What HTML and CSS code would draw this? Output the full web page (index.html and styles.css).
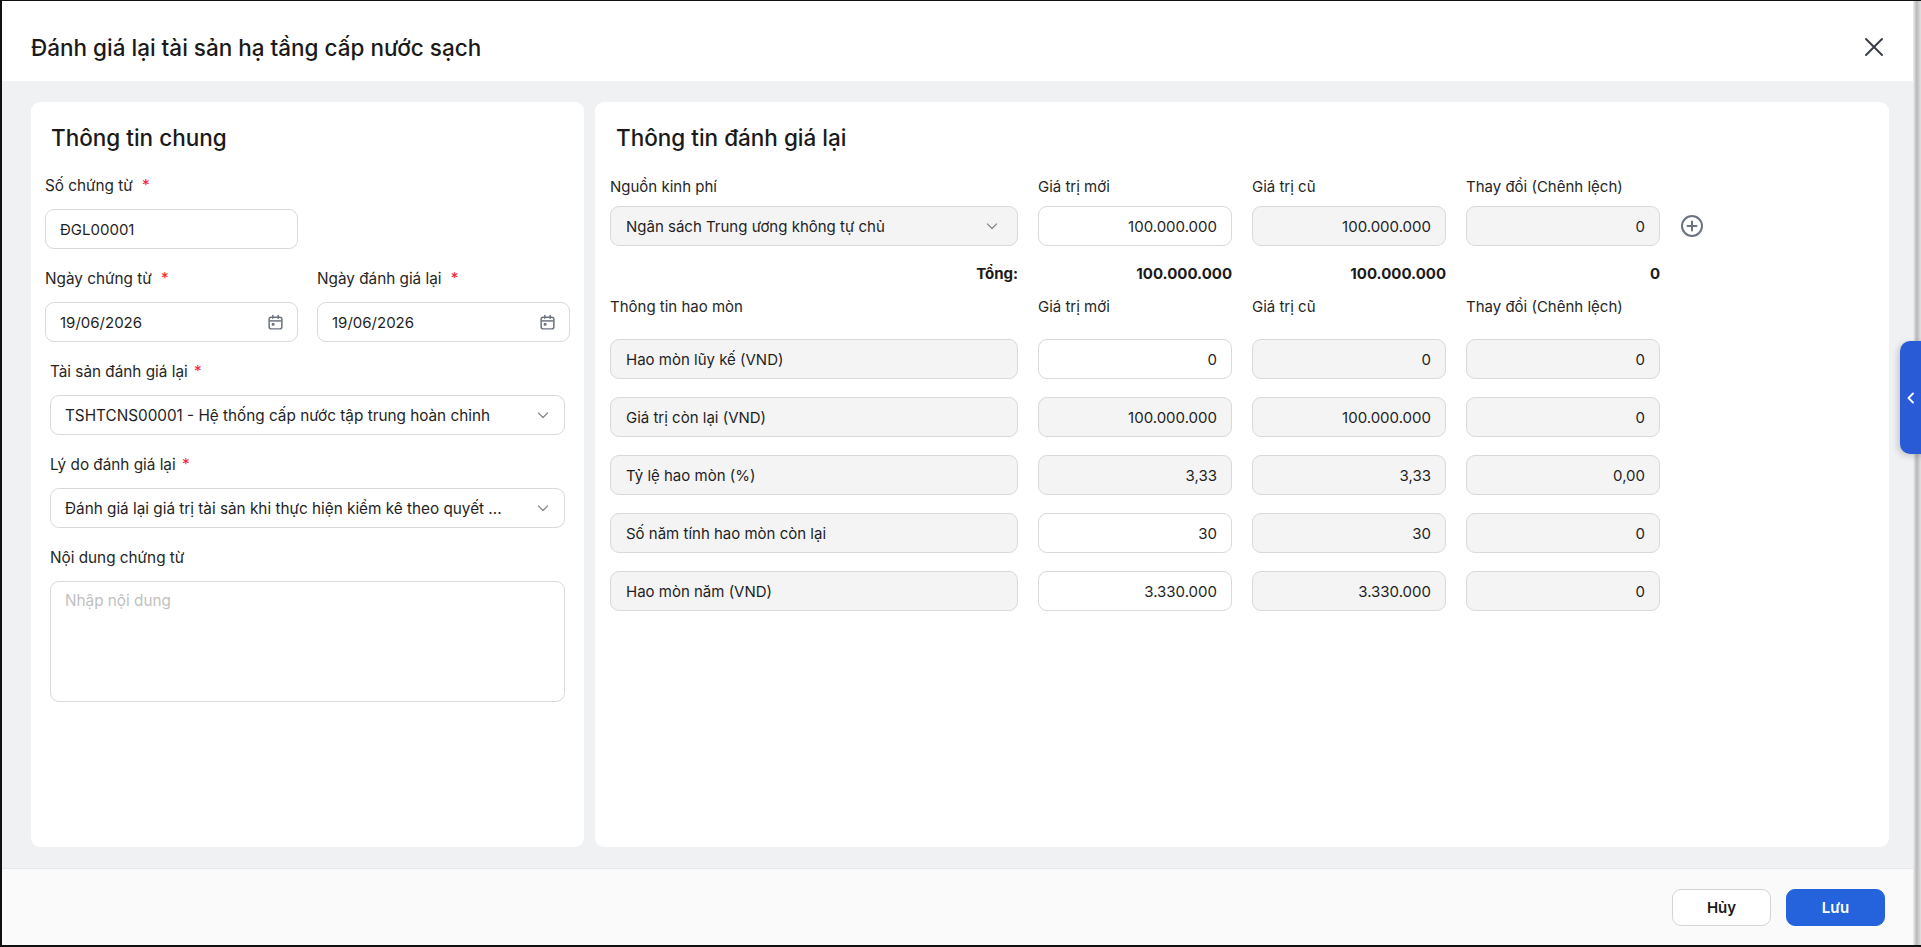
FILE: index.html
```html
<!DOCTYPE html>
<html lang="vi">
<head>
<meta charset="utf-8">
<title>Đánh giá lại tài sản hạ tầng cấp nước sạch</title>
<link rel="stylesheet" href="styles.css">
</head>
<body>
<div class="frame">
  <div class="modal">
    <header class="mhead">
      <h1 class="mtitle">Đánh giá lại tài sản hạ tầng cấp nước sạch</h1>
      <button class="close" aria-label="Đóng">
        <svg width="20" height="20" viewBox="0 0 20 20"><path d="M2 2 L18 18 M18 2 L2 18" stroke="#3a3f47" stroke-width="2" stroke-linecap="round" fill="none"/></svg>
      </button>
    </header>

    <main class="mbody">
      <section class="card card-left">
        <h2 class="ctitle">Thông tin chung</h2>
        <div class="top-fields">
          <div class="field w-half">
            <div class="lbl">Số chứng từ <span class="req req-wide">*</span></div>
            <div class="input">ĐGL00001</div>
          </div>
          <div class="two-col">
            <div class="field">
              <div class="lbl">Ngày chứng từ <span class="req req-wide">*</span></div>
              <div class="input">
                <span class="grow">19/06/2026</span>
                <svg class="cal" width="17" height="17" viewBox="0 0 16 16"><rect x="2" y="3" width="12" height="11" rx="2" fill="none" stroke="#6b7280" stroke-width="1.4"/><path d="M2.5 6.5 H13.5" stroke="#6b7280" stroke-width="1.4"/><path d="M5.5 1.5 V4 M10.5 1.5 V4" stroke="#6b7280" stroke-width="1.4" stroke-linecap="round"/><rect x="4.5" y="8.5" width="2.5" height="2.5" fill="#6b7280"/></svg>
              </div>
            </div>
            <div class="field">
              <div class="lbl">Ngày đánh giá lại <span class="req req-wide">*</span></div>
              <div class="input">
                <span class="grow">19/06/2026</span>
                <svg class="cal" width="17" height="17" viewBox="0 0 16 16"><rect x="2" y="3" width="12" height="11" rx="2" fill="none" stroke="#6b7280" stroke-width="1.4"/><path d="M2.5 6.5 H13.5" stroke="#6b7280" stroke-width="1.4"/><path d="M5.5 1.5 V4 M10.5 1.5 V4" stroke="#6b7280" stroke-width="1.4" stroke-linecap="round"/><rect x="4.5" y="8.5" width="2.5" height="2.5" fill="#6b7280"/></svg>
              </div>
            </div>
          </div>
        </div>
        <div class="bottom-fields">
          <div class="field">
            <div class="lbl">Tài sản đánh giá lại <span class="req">*</span></div>
            <div class="input select">
              <span class="grow ellip">TSHTCNS00001 - Hệ thống cấp nước tập trung hoàn chỉnh</span>
              <svg class="chev" width="14" height="14" viewBox="0 0 14 14"><path d="M2.5 5 L7 9.5 L11.5 5" fill="none" stroke="#8c8c8c" stroke-width="1.3" stroke-linecap="round" stroke-linejoin="round"/></svg>
            </div>
          </div>
          <div class="field">
            <div class="lbl">Lý do đánh giá lại <span class="req">*</span></div>
            <div class="input select">
              <span class="grow ellip">Đánh giá lại giá trị tài sản khi thực hiện kiểm kê theo quyết ...</span>
              <svg class="chev" width="14" height="14" viewBox="0 0 14 14"><path d="M2.5 5 L7 9.5 L11.5 5" fill="none" stroke="#8c8c8c" stroke-width="1.3" stroke-linecap="round" stroke-linejoin="round"/></svg>
            </div>
          </div>
          <div class="field">
            <div class="lbl">Nội dung chứng từ</div>
            <div class="textarea"><span class="ph">Nhập nội dung</span></div>
          </div>
        </div>
      </section>

      <section class="card card-right">
        <h2 class="ctitle">Thông tin đánh giá lại</h2>

        <div class="rrow rlabels">
          <div>Nguồn kinh phí</div>
          <div>Giá trị mới</div>
          <div>Giá trị cũ</div>
          <div>Thay đổi (Chênh lệch)</div>
        </div>
        <div class="rrow rinputs">
          <div class="input select gray pad16">
            <span class="grow">Ngân sách Trung ương không tự chủ</span>
            <svg class="chev" width="14" height="14" viewBox="0 0 14 14"><path d="M2.5 5 L7 9.5 L11.5 5" fill="none" stroke="#8c8c8c" stroke-width="1.3" stroke-linecap="round" stroke-linejoin="round"/></svg>
          </div>
          <div class="input num">100.000.000</div>
          <div class="input num gray">100.000.000</div>
          <div class="input num gray">0</div>
          <svg class="plus" width="24" height="24" viewBox="0 0 24 24"><circle cx="12" cy="12" r="10" fill="none" stroke="#6b7280" stroke-width="2"/><path d="M12 7.5 V16.5 M7.5 12 H16.5" stroke="#6b7280" stroke-width="2" stroke-linecap="round"/></svg>
        </div>
        <div class="rrow rtotal">
          <div>Tổng:</div>
          <div>100.000.000</div>
          <div>100.000.000</div>
          <div>0</div>
        </div>
        <div class="rrow rlabels rlabels2">
          <div>Thông tin hao mòn</div>
          <div>Giá trị mới</div>
          <div>Giá trị cũ</div>
          <div>Thay đổi (Chênh lệch)</div>
        </div>
        <div class="rrows">
          <div class="rrow">
            <div class="input gray pad16">Hao mòn lũy kế (VND)</div>
            <div class="input num">0</div>
            <div class="input num gray">0</div>
            <div class="input num gray">0</div>
          </div>
          <div class="rrow">
            <div class="input gray pad16">Giá trị còn lại (VND)</div>
            <div class="input num gray">100.000.000</div>
            <div class="input num gray">100.000.000</div>
            <div class="input num gray">0</div>
          </div>
          <div class="rrow">
            <div class="input gray pad16">Tỷ lệ hao mòn (%)</div>
            <div class="input num gray">3,33</div>
            <div class="input num gray">3,33</div>
            <div class="input num gray">0,00</div>
          </div>
          <div class="rrow">
            <div class="input gray pad16">Số năm tính hao mòn còn lại</div>
            <div class="input num">30</div>
            <div class="input num gray">30</div>
            <div class="input num gray">0</div>
          </div>
          <div class="rrow">
            <div class="input gray pad16">Hao mòn năm (VND)</div>
            <div class="input num">3.330.000</div>
            <div class="input num gray">3.330.000</div>
            <div class="input num gray">0</div>
          </div>
        </div>
      </section>
    </main>

    <footer class="mfoot">
      <button class="btn btn-cancel">Hủy</button>
      <button class="btn btn-save">Lưu</button>
    </footer>
  </div>
  <div class="edge"></div>
  <button class="side-tab" aria-label="Mở">
    <svg width="10" height="12" viewBox="0 0 10 12"><path d="M7 1.5 L2.5 6 L7 10.5" fill="none" stroke="#fff" stroke-width="1.8" stroke-linecap="round" stroke-linejoin="round"/></svg>
  </button>
</div>
</body>
</html>
```

FILE: styles.css
```css
* { box-sizing: border-box; }
html, body { margin: 0; padding: 0; }
body {
  font-family: Inter, "Noto Sans", "Liberation Sans", sans-serif;
  color: #1f1f1f;
  background: #fff;
}
.frame {
  width: 1921px;
  height: 947px;
  display: flex;
  position: relative;
  overflow: hidden;
  background: #fff;
}
.modal {
  flex: 1;
  display: flex;
  flex-direction: column;
  border-style: solid;
  border-color: #111;
  border-width: 1px 0 2px 2px;
  background: #fff;
  min-width: 0;
}
.edge {
  width: 8px;
  background: linear-gradient(to right, rgba(0,0,0,0.06), rgba(0,0,0,0.28) 45%, rgba(0,0,0,0.12));
  border-bottom: 2px solid #111;
  border-top: 1px solid #111;
}

/* header */
.mhead {
  height: 80px;
  flex: none;
  display: flex;
  align-items: center;
  justify-content: space-between;
  padding: 12px 29px 0 29px;
  background: #fff;
}
.mtitle {
  margin: 0;
  font-size: 22.5px;
  font-weight: 500;
  color: #1a1a1a;
  letter-spacing: 0;
}
.close {
  border: 0;
  background: none;
  padding: 0;
  width: 20px;
  height: 20px;
  display: flex;
}

/* body */
.mbody {
  flex: 1;
  background: #f0f1f3;
  display: flex;
  gap: 11px;
  padding: 21px 24px 21px 29px;
  min-height: 0;
}
.card {
  background: #fff;
  border-radius: 9px;
  padding-top: 22px;
}
.card-left { width: 553px; flex: none; }
.card-right { flex: 1; padding-left: 15px; }
.ctitle {
  margin: 0 0 24px 0;
  font-size: 22.5px;
  line-height: 28px;
  font-weight: 500;
  color: #1a1a1a;
}
.card-left .ctitle { padding-left: 20px; }
.card-right .ctitle { padding-left: 6px; margin-bottom: 25px; }

.field { margin-bottom: 20px; }
.lbl {
  font-size: 15.3px;
  line-height: 20px;
  color: #262626;
  margin-bottom: 13px;
}
.req { color: #f5222d; margin-left: 2px; }
.req-wide { margin-left: 5px; }

.top-fields { padding: 0 14px; }
.w-half { width: 253px; }
.two-col {
  display: grid;
  grid-template-columns: 253px 253px;
  column-gap: 19px;
}
.bottom-fields { padding: 0 19px; }
.bottom-fields .input { font-size: 15.3px; }

.input {
  height: 40px;
  border: 1px solid #d9d9d9;
  border-radius: 9px;
  background: #fff;
  display: flex;
  align-items: center;
  padding: 0 14px;
  font-size: 15px;
  color: #1f1f1f;
  white-space: nowrap;
  min-width: 0;
}
.grow { flex: 1; min-width: 0; }
.ellip { overflow: hidden; text-overflow: ellipsis; }
.cal { flex: none; margin-right: -1px; }
.select { padding-right: 14px; }
.chev { flex: none; }
.pad16 { padding-left: 15px; }
.gray { background: #f4f4f5; }
.num { justify-content: flex-end; }

.textarea {
  height: 121px;
  border: 1px solid #d9d9d9;
  border-radius: 9px;
  padding: 8px 14px;
  font-size: 15.3px;
  line-height: 22px;
}
.ph { color: #bfbfbf; }

/* right grid */
.rrow {
  display: grid;
  grid-template-columns: 408px 194px 194px 194px 24px;
  column-gap: 20px;
  align-items: center;
}
.rlabels {
  font-size: 15px;
  line-height: 20px;
  color: #262626;
  margin-bottom: 9px;
}
.rinputs .select { padding-right: 18px; }
.rtotal {
  margin-top: 18px;
  font-size: 15px;
  line-height: 20px;
  font-weight: 700;
  color: #1a1a1a;
  text-align: right;
}
.rlabels2 { margin-top: 13px; margin-bottom: 22px; }
.rrows { display: flex; flex-direction: column; gap: 18px; }

/* footer */
.mfoot {
  height: 77px;
  flex: none;
  border-top: 1px solid #e5e7eb;
  background: #fafafa;
  display: flex;
  align-items: center;
  justify-content: flex-end;
  gap: 15px;
  padding-right: 28px;
}
.btn {
  height: 37px;
  width: 99px;
  border-radius: 9px;
  font-family: Inter, "Noto Sans", sans-serif;
  font-size: 15px;
  font-weight: 600;
  cursor: pointer;
}
.btn-cancel {
  background: #fff;
  border: 1px solid #d4d4d8;
  color: #1a1a1a;
}
.btn-save {
  background: #2563dc;
  border: 1px solid #2563dc;
  color: #fff;
}

/* side toggle tab overlaying the right edge */
.side-tab {
  position: absolute;
  left: 1900px;
  top: 341px;
  width: 30px;
  height: 113px;
  border: 0;
  border-radius: 10px 0 0 10px;
  background: #2a5bd7;
  box-shadow: -2px 2px 6px rgba(0,0,0,0.18);
  padding: 0 0 0 6px;
  display: flex;
  align-items: center;
}
```
